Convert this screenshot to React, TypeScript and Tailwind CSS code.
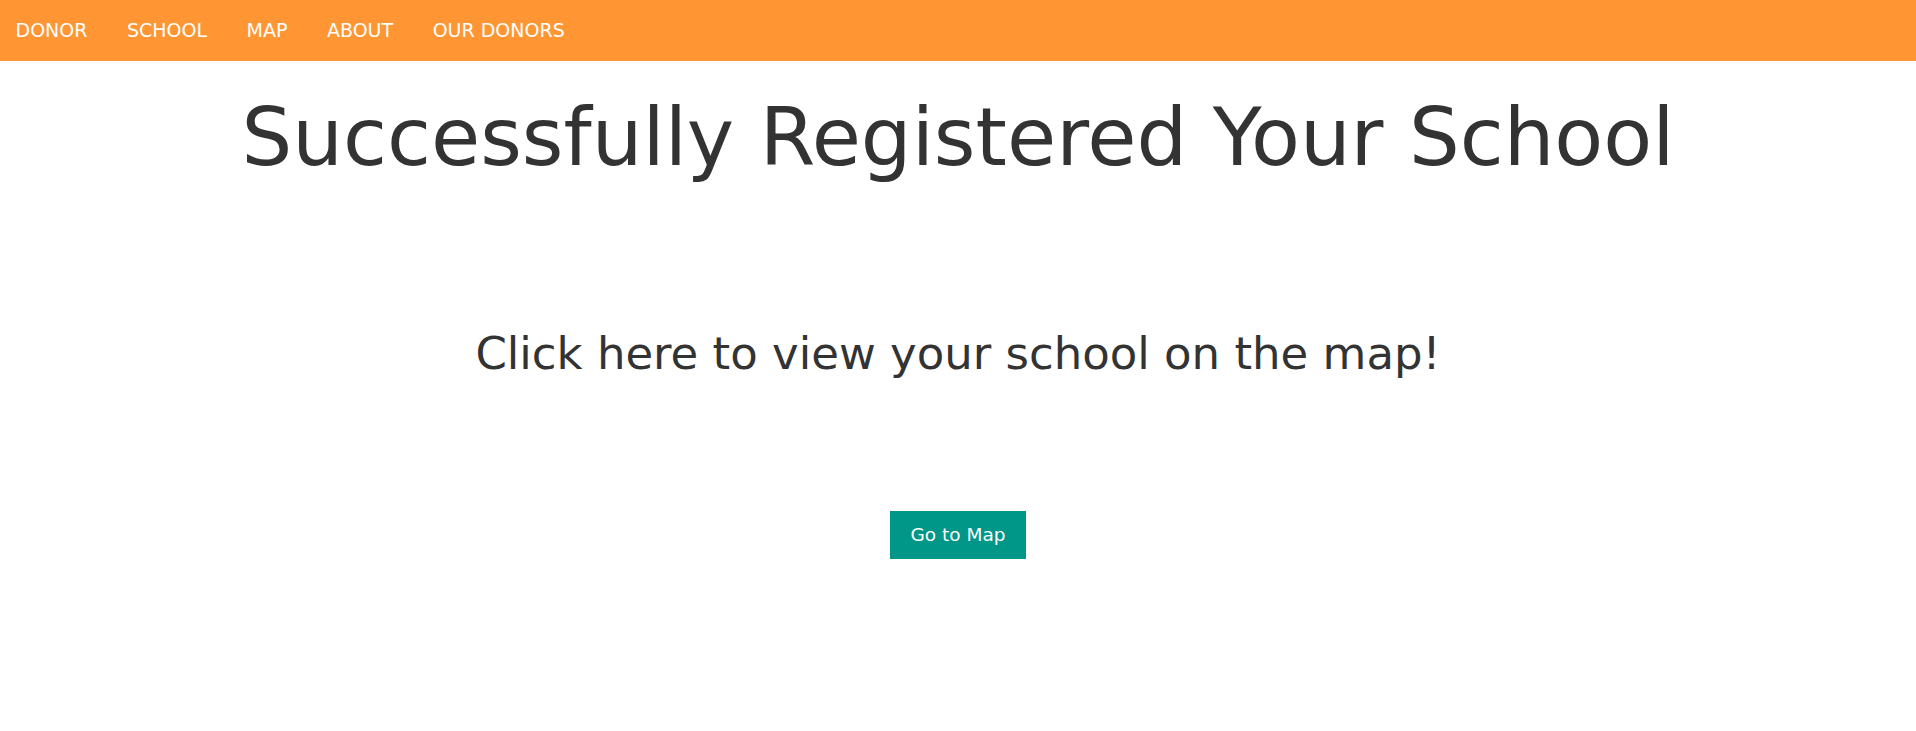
const navItems = ['DONOR', 'SCHOOL', 'MAP', 'ABOUT', 'OUR DONORS'];

export default function App() {
  return (
    <div className="min-h-screen bg-white font-['DejaVu_Sans',sans-serif] text-[#333]">
      <nav className="flex h-[61px] items-center gap-[39.5px] bg-[#ff9633] pl-[15.5px]">
        {navItems.map((item) => (
          <a key={item} href="#" className="text-[19px] text-white">
            {item}
          </a>
        ))}
      </nav>

      <div className="flex flex-col items-center">
        <h1 className="mt-[30px] text-[80px] leading-[93px]">Successfully Registered Your School</h1>
        <p className="mt-[144px] text-[45px] leading-[52px]">Click here to view your school on the map!</p>
        <button className="mt-[131px] h-[48px] w-[136px] bg-[#009688] text-[18.5px] text-white">Go to Map</button>
      </div>
    </div>
  );
}
